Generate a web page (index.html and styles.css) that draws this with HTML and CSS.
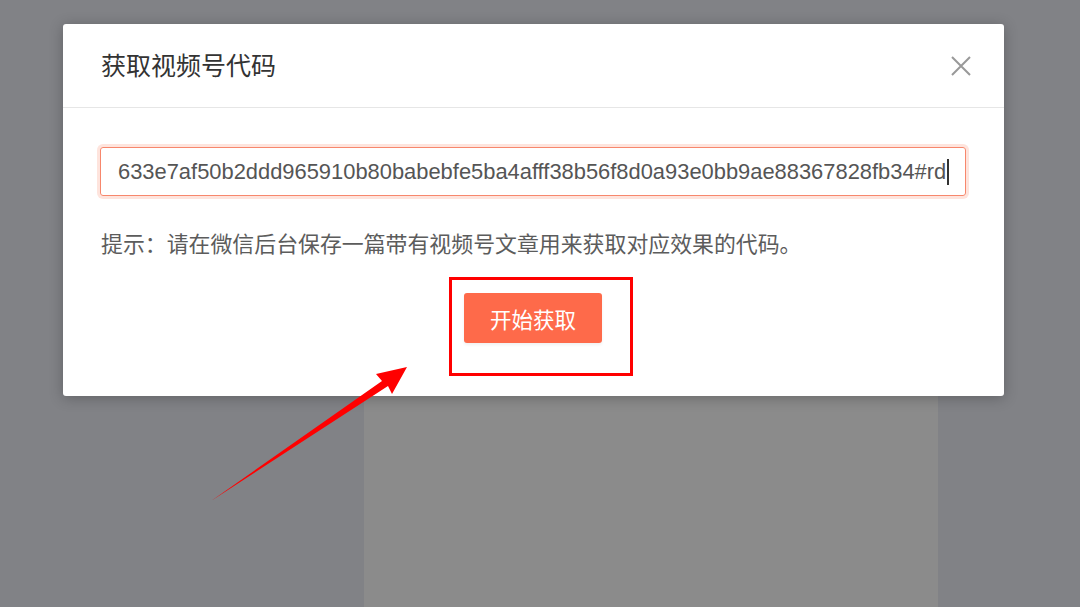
FILE: index.html
```html
<!DOCTYPE html>
<html lang="zh-CN">
<head>
  <meta charset="UTF-8" />
  <meta name="viewport" content="width=device-width, initial-scale=1.0"/>
  <title>获取视频号代码</title>
  <link rel="stylesheet" href="styles.css">
</head>
<body>
  <div class="page">
    <div class="page-panel"></div>
  </div>

  <div class="dialog">
    <div class="dialog-header">
      <span class="dialog-title">获取视频号代码</span>
      <button class="dialog-close" aria-label="关闭">
        <svg width="20" height="20" viewBox="0 0 20 20">
          <path d="M1 1 L19 19 M19 1 L1 19" stroke="#999" stroke-width="2" fill="none"/>
        </svg>
      </button>
    </div>
    <div class="dialog-body">
      <div class="code-input">
        <span class="code-text">633e7af50b2ddd965910b80babebfe5ba4afff38b56f8d0a93e0bb9ae88367828fb34#rd</span><span class="caret"></span>
      </div>
      <p class="hint">提示：请在微信后台保存一篇带有视频号文章用来获取对应效果的代码。</p>
      <div class="actions">
        <button class="start-button">开始获取</button>
      </div>
    </div>
  </div>

  <!-- annotation layer -->
  <svg class="marks" width="1080" height="607" viewBox="0 0 1080 607">
    <rect x="450.5" y="278.5" width="181" height="96" fill="none" stroke="#ff0000" stroke-width="3"/>
    <polygon points="211,501 382,381 376,374 407,367 392,394 388,386" fill="#ff0000"/>
  </svg>
</body>
</html>
```

FILE: styles.css
```css
html, body {
  margin: 0;
  padding: 0;
  width: 100%;
  height: 100%;
  overflow: hidden;
  font-family: "Liberation Sans", "Noto Sans CJK SC", sans-serif;
}

.page {
  display: flex;
  width: 100%;
  height: 100%;
  background: #818286;
}

.page-panel {
  width: 574px;
  margin: 396px 0 0 364px;
  background: #8b8b8b;
}

.dialog {
  position: absolute;
  top: 24px;
  left: 63px;
  width: 941px;
  height: 372px;
  background: #fff;
  border-radius: 3px;
  box-shadow: 0 2px 14px rgba(0, 0, 0, 0.25);
  display: flex;
  flex-direction: column;
}

.dialog-header {
  height: 84px;
  box-sizing: border-box;
  border-bottom: 1px solid #e6e6e6;
  display: flex;
  align-items: center;
  justify-content: space-between;
  padding: 0 33px 0 38px;
}

.dialog-title {
  font-size: 25px;
  color: #333;
  font-family: "Noto Sans CJK SC", sans-serif;
  margin-top: -4px;
}

.dialog-close {
  border: none;
  background: transparent;
  padding: 0;
  width: 20px;
  height: 20px;
  cursor: pointer;
  display: flex;
}

.dialog-body {
  padding: 39px 38px 0 37px;
}

.code-input {
  height: 49px;
  box-sizing: border-box;
  border: 1px solid #f7876c;
  border-radius: 3px;
  box-shadow: 0 0 0 3px rgba(250, 130, 100, 0.22);
  display: flex;
  align-items: center;
  padding-left: 17px;
  overflow: hidden;
  white-space: nowrap;
}

.code-text {
  font-size: 21.9px;
  color: #555;
}

.caret {
  width: 1.5px;
  height: 26px;
  background: #333;
  margin-left: 1px;
}

.hint {
  margin: 34px 0 0 1px;
  font-size: 21.9px;
  color: #5c5c5c;
  font-family: "Noto Sans CJK SC", sans-serif;
  line-height: 26px;
}

.actions {
  display: flex;
  justify-content: center;
  margin-top: 37px;
}

.start-button {
  width: 138px;
  height: 50px;
  border: none;
  border-radius: 3px;
  background: #fe6a4a;
  color: #fff;
  font-size: 21.5px;
  font-family: "Noto Sans CJK SC", sans-serif;
  box-shadow: 0 2px 3px rgba(0, 0, 0, 0.06);
  cursor: pointer;
}

.marks {
  position: absolute;
  top: 0;
  left: 0;
  pointer-events: none;
}
```
